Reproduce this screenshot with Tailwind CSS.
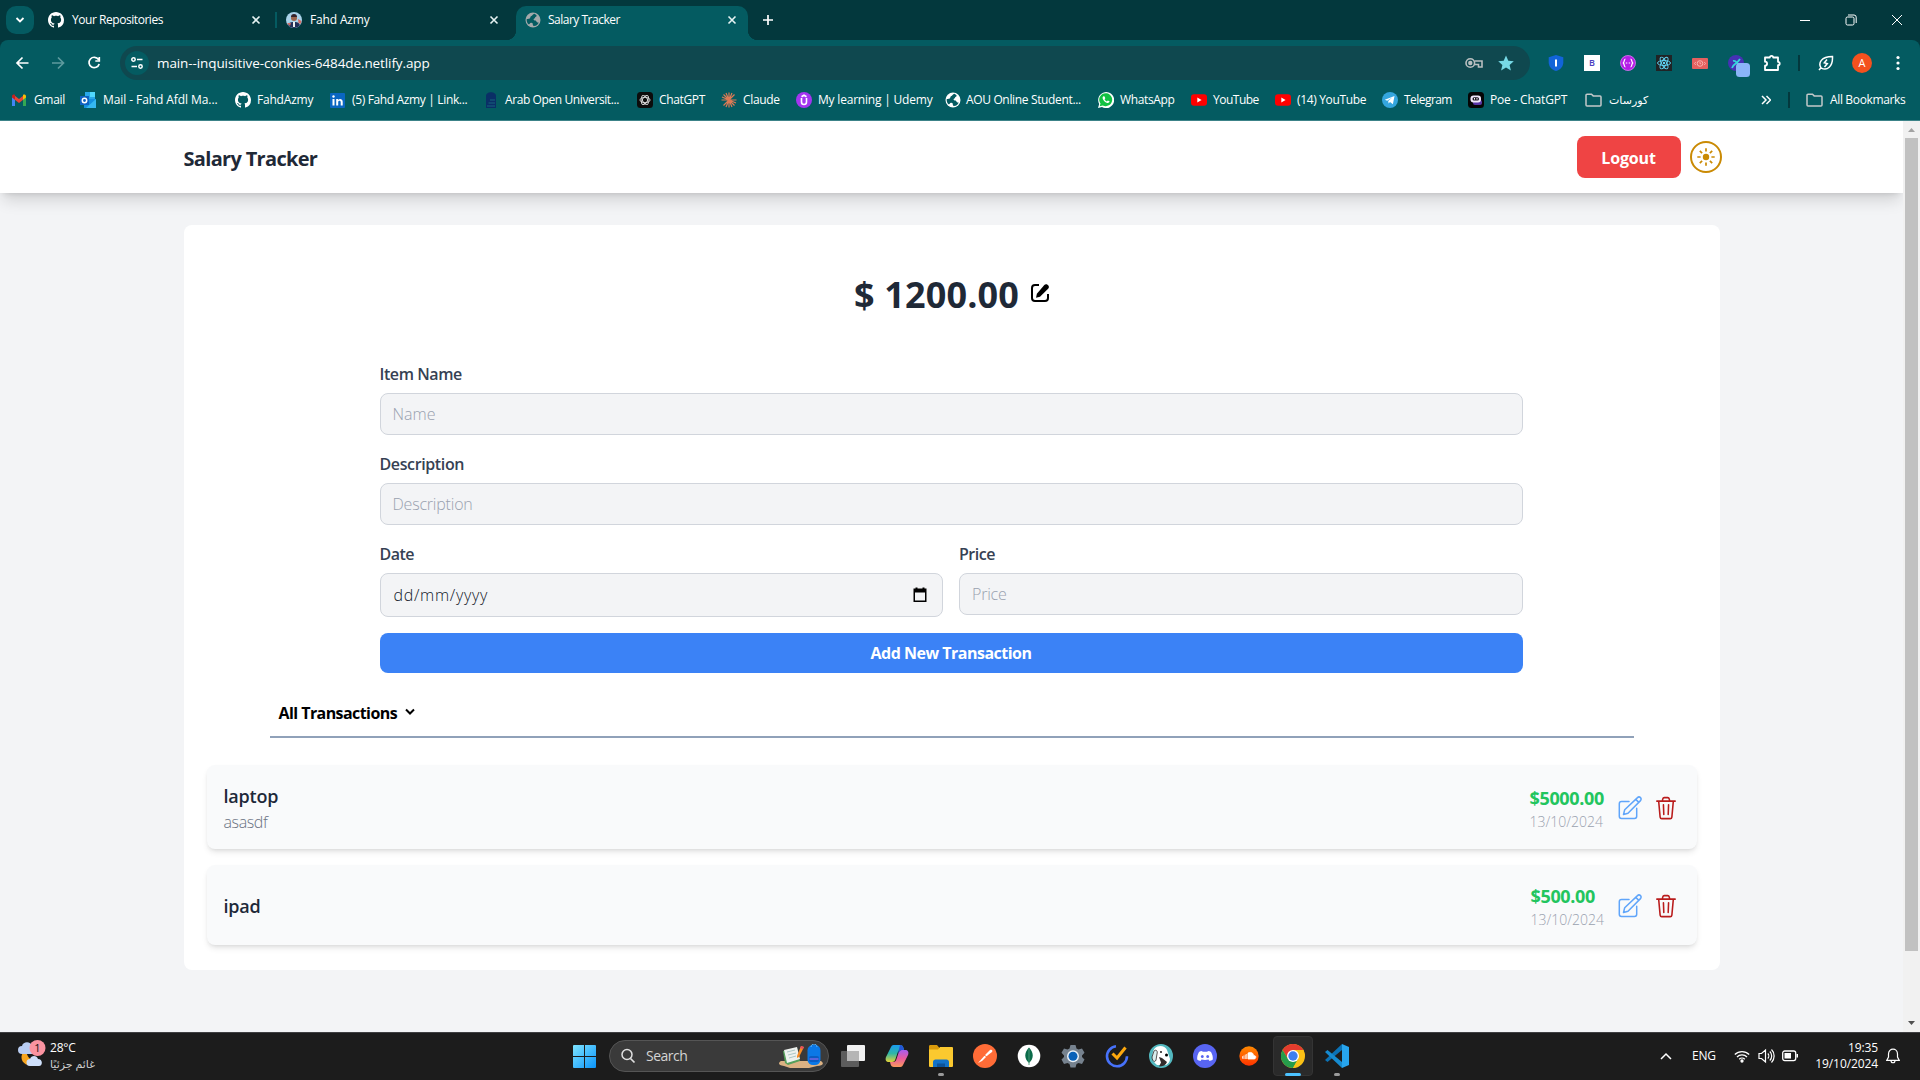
<!DOCTYPE html>
<html lang="en">
<head>
<meta charset="utf-8">
<title>Salary Tracker</title>
<script src="https://cdn.jsdelivr.net/npm/@tailwindcss/browser@4"></script>
</head>
<body class="w-[1920px] h-[1080px] overflow-hidden flex flex-col bg-gray-100 font-['Open_Sans','Noto_Sans',sans-serif]">
<svg class="hidden">
  <symbol id="github" viewBox="0 0 16 16"><path fill="#fff" d="M8 0C3.58 0 0 3.58 0 8c0 3.54 2.29 6.53 5.47 7.59.4.07.55-.17.55-.38 0-.19-.01-.82-.01-1.49-2.01.37-2.53-.49-2.69-.94-.09-.23-.48-.94-.82-1.13-.28-.15-.68-.52-.01-.53.63-.01 1.08.58 1.23.82.72 1.21 1.87.87 2.33.66.07-.52.28-.87.51-1.07-1.78-.2-3.64-.89-3.64-3.95 0-.87.31-1.59.82-2.15-.08-.2-.36-1.02.08-2.12 0 0 .67-.21 2.2.82.64-.18 1.32-.27 2-.27s1.36.09 2 .27c1.53-1.04 2.2-.82 2.2-.82.44 1.1.16 1.92.08 2.12.51.56.82 1.27.82 2.15 0 3.07-1.87 3.75-3.65 3.95.29.25.54.73.54 1.48 0 1.07-.01 1.93-.01 2.2 0 .21.15.46.55.38A8.01 8.01 0 0 0 16 8c0-4.42-3.58-8-8-8z"/></symbol>
  <symbol id="x" viewBox="0 0 10 10"><path d="M1.5 1.5l7 7M8.500 1.500l-7 7" stroke="#e6f3f3" stroke-width="1.6" fill="none"/></symbol>
  <symbol id="globe" viewBox="0 0 16 16"><circle cx="8" cy="8" r="7.500" fill="currentColor"/><path fill="#045b61" d="M9.500 1.800c-2 .4-2 2-3.500 2.400-1 .4-.3 1.800-1.300 2.400-.8.5-1.700.4-3 .4-.2 2 .4 4 1.800 5.200C5 12.800 4.600 11 6 10.800c1.500-.1 2 .9 1.800 2 .8.500.2 1.300 1 1.300 2.800-.2 4.200-1.900 4.900-3.700-1.400.2-2-.4-2.400-1.200-.6-1.200-2.400-.4-2.700-1.400-.3-1.200 1.500-1 1.500-2.200 0-1 1.700-.8 1.600-1.800-.2-.8-1.200-1.400-2.200-2z"/></symbol>
  <symbol id="youtube" viewBox="0 0 16 16"><rect y="2.300" width="16" height="11.500" rx="3" fill="#f00"/><path d="M6.300 5.500v5L10.600 8z" fill="#fff"/></symbol>
  <symbol id="folder" viewBox="0 0 17 14"><path d="M1 2.200a1 1 0 0 1 1-1h4.500l1.700 1.700H15a1 1 0 0 1 1 1v8a1 1 0 0 1-1 1H2a1 1 0 0 1-1-1z" fill="none" stroke="#c3c9c9" stroke-width="1.500"/></symbol>
  <symbol id="edit" viewBox="0 0 24 24"><path d="M11 5.500H3.500A2.200 2.200 0 0 0 1.300 7.700v12.600a2.200 2.200 0 0 0 2.200 2.200h13a2.200 2.200 0 0 0 2.200-2.200v-8M5.500 18.500l1.200-4.700L19.500 1.600a2 2 0 0 1 3 3L10 17.200zM17.800 3.400l3 3" fill="none" stroke="#60a5fa" stroke-width="1.500" stroke-linejoin="round" stroke-linecap="round"/></symbol>
  <symbol id="trash" viewBox="0 0 24 26"><path d="M2 5.500h20M4 5.500l1.600 17.400c.1 1 .8 1.700 1.800 1.700h9.200c1 0 1.700-.7 1.800-1.700L20 5.500M8 5.200L8.500 3c.2-.8.8-1.300 1.600-1.300h3.800c.8 0 1.400.5 1.600 1.300l.5 2.200M9.200 9.500l.4 10.500M14.800 9.500l-.4 10.500" fill="none" stroke="#b91c1c" stroke-width="1.700" stroke-linecap="round" stroke-linejoin="round"/></symbol>
</svg>

<!-- Tab strip -->
<div class="h-10 shrink-0 bg-[#03383d] flex items-end text-white text-xs">
  <div class="w-[34px] h-10 pl-1.5 flex items-center"><div class="w-7 h-7 rounded-[10px] bg-[#045b61] flex items-center justify-center"><svg class="w-2.5 h-2.5" viewBox="0 0 10 10"><path d="M1.500 3l3.500 3.500L8.500 3" fill="none" stroke="#fff" stroke-width="1.800"/></svg></div></div>
  <div class="w-[241px] h-10 flex items-center pl-3.5 pr-3.5"><svg class="w-4 h-4"><use href="#github"/></svg><span class="ml-2 flex-1 whitespace-nowrap tracking-[-0.45px]">Your Repositories</span><svg class="w-2.5 h-2.5"><use href="#x"/></svg></div>
  <div class="w-0.5 h-4 mb-3 bg-[#045b61]"></div>
  <div class="w-[239px] h-10 flex items-center pl-[9px] pr-[17px]"><svg class="w-4 h-4" viewBox="0 0 16 16"><circle cx="8" cy="8" r="8" fill="#a9d3ea"/><path d="M2 13.300C3 10 5.500 10 8 10s5 0 6 3.300A8 8 0 0 1 2 13.300z" fill="#22305a"/><path d="M1 11h4l-1 3zM12 7l3.500 2-1 3-2-1z" fill="#d56b64"/><circle cx="8" cy="6" r="3" fill="#9b654e"/><path d="M5 5a3 3 0 0 1 6 0z" fill="#33242c"/><path d="M7 10h2v5H7z" fill="#eee"/></svg><span class="ml-2 flex-1 tracking-[-0.15px]">Fahd Azmy</span><svg class="w-2.5 h-2.5"><use href="#x"/></svg></div>
  <div class="relative w-[232px] h-[34px] rounded-t-[10px] bg-[#045b61] flex items-center pl-[9px] pr-[11px]">
    <span class="absolute -left-2.5 bottom-0 w-2.5 h-2.5 bg-[radial-gradient(circle_at_0_0,#03383d_10px,#045b61_10.5px)]"></span>
    <span class="absolute -right-2.5 bottom-0 w-2.5 h-2.5 bg-[radial-gradient(circle_at_100%_0,#03383d_10px,#045b61_10.5px)]"></span>
    <svg class="w-4 h-4 text-[#a3a9ab] -mt-1.5"><use href="#globe"/></svg><span class="ml-[7px] flex-1 -mt-1.5 tracking-[-0.5px]">Salary Tracker</span><svg class="w-2.5 h-2.5 -mt-1.5"><use href="#x"/></svg>
  </div>
  <div class="flex-1 h-10 flex items-center pl-[14px]"><svg class="w-3 h-3" viewBox="0 0 12 12"><path d="M6 1v10M1 6h10" stroke="#fff" stroke-width="1.700"/></svg></div>
  <div class="h-10 flex items-center">
    <div class="w-[46px] flex justify-center"><div class="w-2.5 h-px bg-white"></div></div>
    <div class="w-[46px] flex justify-center"><svg class="w-3 h-3" viewBox="0 0 12 12"><path d="M3 1h6a2.200 2.200 0 0 1 2.200 2.200V9M2.500 3h5A1.500 1.500 0 0 1 9 4.500v5A1.500 1.500 0 0 1 7.500 11h-5A1.500 1.500 0 0 1 1 9.500v-5A1.500 1.500 0 0 1 2.500 3z" fill="none" stroke="#fff"/></svg></div>
    <div class="w-[46px] flex justify-center"><svg class="w-3 h-3" viewBox="0 0 12 12"><path d="M1 1l10 10M11 1L1 11" stroke="#fff"/></svg></div>
  </div>
</div>

<!-- Toolbar and bookmarks -->
<div class="shrink-0 bg-[#03383d]"><div class="h-[81px] bg-[#045b61] rounded-t-[8px] border-b border-[#3c8388]">
  <div class="h-[46px] flex items-center">
    <div class="w-[120px] pl-1 flex items-center">
      <svg class="w-9 h-4" viewBox="0 0 36 16"><path d="M24.500 8H13M18.500 2.500L13 8l5.500 5.500" fill="none" stroke="#fff" stroke-width="1.700"/></svg>
      <svg class="w-9 h-4" viewBox="0 0 36 16"><path d="M12 8h11.500M18 2.500L23.500 8 18 13.500" fill="none" stroke="#5e9a9e" stroke-width="1.700"/></svg>
      <svg class="w-9 h-4" viewBox="0 0 36 16"><path d="M22.500 4.500A5.200 5.200 0 1 0 23.200 9M23.300 2v4h-4" fill="none" stroke="#fff" stroke-width="1.700"/></svg>
    </div>
    <div class="w-[1410px] h-[34px] rounded-full bg-[#0f484f] flex items-center pl-[5px] pr-4">
      <div class="w-6 h-6 rounded-full bg-[#045b61] flex items-center justify-center"><svg class="w-3.5 h-3.5" viewBox="0 0 14 14" fill="none" stroke="#fff" stroke-width="1.500"><circle cx="3.500" cy="3.500" r="1.700"/><path d="M7 3.500h5.500M1.500 10.500h5.500"/><circle cx="10.500" cy="10.500" r="1.700"/></svg></div>
      <span class="ml-2 flex-1 text-[13.5px] text-white tracking-[-0.1px] whitespace-nowrap">main--inquisitive-conkies-6484de.netlify.app</span>
      <svg class="w-[18px] h-3 mr-[15px]" viewBox="0 0 18 12" fill="none" stroke="#b9bfc0" stroke-width="1.600"><path d="M9.500 4H17v3.200V10h-3.500V7.500H9.500"/><circle cx="5.300" cy="6" r="4.300"/><circle cx="5.300" cy="6" r="1.400" fill="#b9bfc0"/></svg>
      <svg class="w-4 h-4" viewBox="0 0 16 16"><path fill="#76d9e6" d="M8 .5l2.300 5.200 5.500.5-4.200 3.700 1.300 5.600L8 12.600l-4.900 2.900 1.300-5.600L.2 6.200l5.500-.5z"/></svg>
    </div>
    <div class="ml-2 flex items-center">
      <div class="w-9 flex justify-center"><svg class="w-4 h-4" viewBox="0 0 16 16"><path d="M8 0l7.300 2.200v5c0 4.500-3 7.500-7.300 8.800C3.700 14.700.7 11.700.7 7.200v-5z" fill="#1264d8"/><path d="M7 4.500h2v7H7z" fill="#fff"/></svg></div>
      <div class="w-9 flex justify-center"><div class="w-4 h-4 bg-white text-[#4a3fc0] text-[9px] font-semibold leading-4 text-center">B</div></div>
      <div class="w-9 flex justify-center"><svg class="w-4 h-4" viewBox="0 0 16 16"><circle cx="8" cy="8" r="7.700" fill="#b41de8"/><circle cx="8" cy="8" r="7.500" fill="none" stroke="#dfa0f2" stroke-width=".6"/><path d="M5.500 4c-1.500 0-.8 2.500-2.200 4 1.400 1.500.7 4 2.200 4M10.500 4c1.500 0 .8 2.500 2.200 4-1.400 1.500-.7 4-2.200 4M5.800 8h1.500M8.700 8h1.500" stroke="#fff" stroke-width="1.200" fill="none"/></svg></div>
      <div class="w-9 flex justify-center"><svg class="w-4 h-4" viewBox="0 0 16 16"><path fill="#202325" d="M0 0h16v16H0z"/><g fill="none" stroke="#61dafb" stroke-width=".9"><ellipse cx="8" cy="8" rx="6.500" ry="2.500"/><ellipse cx="8" cy="8" rx="6.500" ry="2.500" transform="rotate(60 8 8)"/><ellipse cx="8" cy="8" rx="6.500" ry="2.500" transform="rotate(120 8 8)"/></g><circle cx="8" cy="8" r="1.200" fill="#61dafb"/></svg></div>
      <div class="w-9 flex justify-center"><svg class="w-4 h-[11px]" viewBox="0 0 16 11"><rect width="16" height="11" rx="1" fill="#e5605f"/><circle cx="8" cy="5.500" r="2.800" fill="none" stroke="#f5b3b0"/><path d="M8 4v1.700h1.200M3.800 4L2.500 5.500l1.300 1.500M12.200 4l1.300 1.500L12.200 7" fill="none" stroke="#f5b3b0" stroke-width=".9"/></svg></div>
      <div class="w-9 flex justify-center"><svg class="w-[22px] h-[22px] translate-x-[3px] translate-y-[3px]" viewBox="0 0 22 22"><circle cx="8" cy="8" r="8" fill="#4631b5"/><path d="M4 13C6 8 8 10 12 4M5 6c4-1 3 3 6 3" fill="none" stroke="#35d5dc" stroke-width="1.800"/><rect x="8" y="8" width="14" height="14" rx="3.500" fill="#8ab4f8"/></svg></div>
      <div class="w-9 flex justify-center"><svg class="w-[18px] h-[18px]" viewBox="0 0 18 18"><path d="M2 3.500h4.800a1.700 1.700 0 0 1 3.400 0H15v4.300a1.700 1.700 0 0 1 0 3.400V16H2v-4.300c2.800-.2 2.800-3.800 0-4z" fill="none" stroke="#fff" stroke-width="1.800" stroke-linejoin="round"/></svg></div>
      <div class="w-[18px] flex justify-center"><div class="w-0.5 h-4 bg-[#03383d]"></div></div>
      <div class="w-9 flex justify-center"><svg class="w-4 h-4" viewBox="0 0 16 16" fill="none" stroke="#fff" stroke-width="1.500"><path d="M1 15l2-2.200C0 8 3 1.500 14.500 1.500 15 11.500 9 16.500 3 12.800M9 4.500L6.300 7.800l3 .8L6.500 12"/></svg></div>
      <div class="w-9 flex justify-center"><div class="w-5 h-5 rounded-full bg-[#f4511e] text-white text-[11px] leading-5 text-center">A</div></div>
      <div class="w-9 flex justify-center"><svg class="w-1 h-4" viewBox="0 0 4 16" fill="#fff"><circle cx="2" cy="2.500" r="1.600"/><circle cx="2" cy="8" r="1.600"/><circle cx="2" cy="13.500" r="1.600"/></svg></div>
    </div>
  </div>
  <div class="h-7 flex items-center pl-[11px] text-white text-xs whitespace-nowrap tracking-[-0.35px]">
    <div class="w-[69px] flex items-center gap-[7px]"><svg class="w-4 h-4" viewBox="0 0 16 16"><path fill="#4285f4" d="M1 14h3V7L1 4.500z"/><path fill="#34a853" d="M12 14h3V4.500L12 7z"/><path fill="#ea4335" d="M3.500 3.500L8 7l4.500-3.500v4L8 11 3.500 7.500z"/><path fill="#c5221f" d="M1 4.500C1 2.500 3 2 4 3v4.700L1 5.500z"/><path fill="#fbbc04" d="M15 4.500C15 2.500 13 2 12 3v4.700l3-2.200z"/></svg>Gmail</div>
    <div class="w-[155px] flex items-center gap-[7px] tracking-[-0.08px]"><svg class="w-4 h-4" viewBox="0 0 16 16"><path fill="#28a8ea" d="M5 0h10v9H5z"/><path fill="#50d9ff" d="M10 0h5v5h-5z"/><path fill="#1490df" d="M4 7l12 0v9H4z"/><path fill="#35b8f1" d="M16 7v9H6z"/><path fill="#0f62c0" d="M0 4h9v9H0z"/><circle cx="4.500" cy="8.500" r="2.200" fill="none" stroke="#fff" stroke-width="1.500"/></svg>Mail - Fahd Afdl Ma...</div>
    <div class="w-[95px] flex items-center gap-[6px] tracking-[-0.2px]"><svg class="w-4 h-4"><use href="#github"/></svg>FahdAzmy</div>
    <div class="w-[153px] flex items-center gap-[7px]"><svg class="w-[15px] h-[15px]" viewBox="0 0 15 15"><rect width="15" height="15" rx="1" fill="#0a66c2"/><path d="M2.500 6h2v6.500h-2zM6.200 6h2v1c1-1.700 4.500-1.500 4.500 1.700v3.800h-2V9.200c0-2-2.500-1.800-2.500 0v3.300h-2z" fill="#fff"/><circle cx="3.500" cy="3.500" r="1.200" fill="#fff"/></svg>(5) Fahd Azmy | Link...</div>
    <div class="w-[154px] flex items-center gap-[6px] tracking-[-0.4px]"><svg class="w-4 h-4" viewBox="0 0 16 16"><path d="M3 16V4c0-5 10-5 10 0v12z" fill="#0a2f66"/><path d="M7 8h5M5.500 11H12M4 14h8" stroke="#17657c"/></svg>Arab Open Universit...</div>
    <div class="w-[84px] flex items-center gap-[6px]"><svg class="w-4 h-4" viewBox="0 0 16 16"><rect width="16" height="16" rx="3.500" fill="#0c0c0c"/><g fill="none" stroke="#ddd" stroke-width=".9"><ellipse cx="8" cy="8" rx="5" ry="2.600"/><ellipse cx="8" cy="8" rx="5" ry="2.600" transform="rotate(60 8 8)"/><ellipse cx="8" cy="8" rx="5" ry="2.600" transform="rotate(120 8 8)"/></g></svg>ChatGPT</div>
    <div class="w-[75px] flex items-center gap-[6px]"><svg class="w-4 h-4" viewBox="0 0 16 16"><path d="M8 .5v15M.5 8h15M2.500 2.500l11 11M13.500 2.500l-11 11M5 1l6 14M11 1L5 15M1 5l14 6" stroke="#dc7a55" stroke-width="1.200"/></svg>Claude</div>
    <div class="w-[149px] flex items-center gap-[6px] tracking-[-0.2px]"><svg class="w-4 h-4" viewBox="0 0 16 16"><circle cx="8" cy="8" r="8" fill="#a435f0"/><path d="M5.500 6v4c0 3.300 5 3.300 5 0V6M5.500 4.800L8 3.300l2.500 1.500" fill="none" stroke="#fff" stroke-width="1.600"/></svg>My learning | Udemy</div>
    <div class="w-[153px] flex items-center gap-[5px]"><svg class="w-4 h-4 text-white"><use href="#globe"/></svg>AOU Online Student...</div>
    <div class="w-[93px] flex items-center gap-[6px]"><svg class="w-4 h-4" viewBox="0 0 16 16"><path d="M0 16l1.200-4A8 8 0 1 1 4 14.900z" fill="#fff"/><path d="M1.700 14.300l.8-2.700A6.500 6.500 0 1 1 4.800 13.500z" fill="#12c143"/><path d="M5.300 4.300c-2 1.500.5 5.800 4 6.700 1.300.3 2.500-1 2.200-1.700L9.800 8.500l-.9.900C7.800 9 7 8 6.600 7.200l.7-.9-.7-1.900z" fill="#fff"/></svg>WhatsApp</div>
    <div class="w-[84px] flex items-center gap-[6px] tracking-[-0.5px]"><svg class="w-4 h-4"><use href="#youtube"/></svg>YouTube</div>
    <div class="w-[107px] flex items-center gap-[6px]"><svg class="w-4 h-4"><use href="#youtube"/></svg>(14) YouTube</div>
    <div class="w-[86px] flex items-center gap-[6px] tracking-[-0.55px]"><svg class="w-4 h-4" viewBox="0 0 16 16"><circle cx="8" cy="8" r="8" fill="#35a6de"/><path d="M2.800 7.800L12.500 4l-1.600 8.200L8 10l-1.400 1.500-.4-2.500 4-3.500-5 3.200z" fill="#fff"/></svg>Telegram</div>
    <div class="w-[117px] flex items-center gap-[6px] tracking-[-0.2px]"><svg class="w-4 h-4" viewBox="0 0 16 16"><rect width="16" height="16" rx="3.500" fill="#050505"/><rect x="5" y="8" width="9" height="5" rx="2" fill="#5a35a5"/><rect x="2.500" y="3.500" width="10.500" height="7" rx="3" fill="#f0e8fa"/><rect x="4.500" y="5.300" width="6.500" height="3.200" rx="1.500" fill="#1a1520"/><path d="M6.500 6v1.600M9 6v1.600" stroke="#fff"/></svg>Poe - ChatGPT</div>
    <div class="flex-1 flex items-center gap-[7px]"><svg class="w-[17px] h-3.5"><use href="#folder"/></svg><span class="text-[11px] tracking-normal font-['Noto_Sans','DejaVu_Sans',sans-serif]">كورسات</span></div>
    <svg class="w-2.5 h-2.5 mr-[17px]" viewBox="0 0 10 10"><path d="M1 1l4 4-4 4M5.500 1l4 4-4 4" fill="none" stroke="#fff" stroke-width="1.500"/></svg>
    <div class="w-0.5 h-4 bg-[#03383d] mr-4"></div>
    <div class="w-[114px] flex items-center gap-[7px]"><svg class="w-[17px] h-3.5"><use href="#folder"/></svg>All Bookmarks</div>
  </div>
</div></div>

<!-- Page viewport -->
<div class="h-[911px] shrink-0 flex">
  <div class="w-[1903px] overflow-hidden bg-gray-100">
    <header class="h-[72px] bg-white shadow-[0_10px_15px_-3px_rgba(0,0,0,0.14),0_4px_6px_-4px_rgba(0,0,0,0.14)]">
      <div class="w-[1536px] mx-auto h-full flex items-center">
        <h1 class="flex-1 pt-1 text-xl font-bold text-[#1f2937] tracking-[-0.68px] word-spacing-[1px]">Salary Tracker</h1>
        <button class="w-[104px] h-[42px] rounded-[8px] bg-[#ef4444] text-white font-bold tracking-[-0.15px] pt-px">Logout</button>
        <div class="ml-[9px] -mr-0.5 w-8 h-8 rounded-full border-2 border-[#ca8a04] flex items-center justify-center"><svg class="w-[18px] h-[18px]" viewBox="0 0 18 18"><circle cx="9" cy="9" r="3.200" fill="#ca8a04"/><path d="M9 .3v3.300M9 14.400v3.300M.3 9h3.300M14.400 9h3.300M2.800 2.800l2.300 2.300M12.900 12.900l2.300 2.300M2.800 15.200l2.300-2.300M12.900 5.100l2.300-2.300" stroke="#ca8a04" stroke-width="1.700"/></svg></div>
      </div>
    </header>
    <main class="w-[1536px] h-[745px] mx-auto mt-8 rounded-lg bg-white px-6 pt-12">
      <div class="h-11 flex items-center justify-center gap-3 text-[#1f2937]">
        <h2 class="text-4xl font-bold tracking-[0.15px] leading-10">$ 1200.00</h2>
        <svg class="w-[18px] h-[18px] -mt-1" viewBox="0 0 18 18"><path d="M8 1H4a3 3 0 0 0-3 3v10a3 3 0 0 0 3 3h10a3 3 0 0 0 3-3v-4" fill="none" stroke="#000" stroke-width="2"/><path d="M13.300.900c.9-.8 2.200-.9 3.200-.2l.9.900c.7 1 .6 2.300-.3 3.200L9 12.800 5 13.700l.9-4z" fill="#000"/></svg>
      </div>
      <form class="w-[1143px] ml-[172px] mt-[45px] text-base">
        <label class="block h-[31px] leading-6 font-semibold text-gray-700 tracking-[-0.42px]">Item Name</label>
        <div class="h-[42px] mb-[17px] rounded-[8px] border border-gray-300 bg-gray-100 px-3 leading-[41px] font-light text-gray-400">Name</div>
        <label class="block h-[31px] leading-6 font-semibold text-gray-700 tracking-[-0.38px]">Description</label>
        <div class="h-[42px] mb-[17px] rounded-[8px] border border-gray-300 bg-gray-100 px-3 leading-[41px] font-light text-gray-400 tracking-[-0.2px]">Description</div>
        <div class="grid grid-cols-2 gap-4 h-[91px]">
          <div><label class="block h-[31px] leading-6 font-semibold text-gray-700 tracking-[-0.5px]">Date</label>
            <div class="h-11 rounded-[8px] border border-gray-300 bg-gray-100 pl-[13px] pr-[14px] flex items-center justify-between font-light text-gray-900 tracking-[0.7px]"><span>dd/mm/yyyy</span><svg class="w-4 h-4" viewBox="0 0 16 16"><path d="M1.500 1.500h13v13.500h-13z" fill="#000"/><path d="M3 5.500h10v8H3z" fill="#f3f4f6"/><path d="M3.500.5h2v2h-2zM10.500.5h2v2h-2z" fill="#000"/></svg></div></div>
          <div><label class="block h-[31px] leading-6 font-semibold text-gray-700 tracking-[-0.5px]">Price</label>
            <div class="h-[42px] rounded-[8px] border border-gray-300 bg-gray-100 px-3 leading-[41px] font-light text-gray-400 tracking-[-0.2px]">Price</div></div>
        </div>
        <div class="h-10 rounded-[8px] bg-[#3b82f6] text-white font-bold text-center leading-10 tracking-[-0.5px]">Add New Transaction</div>
      </form>
      <div class="w-[1364px] ml-[62px] mt-4 h-[49px] border-b-2 border-slate-400 pl-[9px] flex items-center gap-2 font-bold text-black tracking-[-0.57px]"><span>All Transactions</span><svg class="w-2.5 h-2 -mt-0.5" viewBox="0 0 10 8"><path d="M1 1.500L5 5.500l4-4" fill="none" stroke="#000" stroke-width="2"/></svg></div>
      <div class="mt-[27px] -mx-px flex flex-col gap-4">
        <div class="h-[84px] rounded-lg bg-gray-50 shadow-md pl-[17px] pr-[20px] pt-0.5 flex items-center">
          <div class="flex-1"><div class="text-lg leading-7 font-semibold text-gray-800 tracking-[-0.2px]">laptop</div><div class="leading-6 font-light text-gray-500 tracking-[-0.4px]">asasdf</div></div>
          <div class="w-[88px] mt-[3px]"><div class="text-lg leading-6 font-bold text-[#22c55e] tracking-[-0.35px]">$5000.00</div><div class="text-sm leading-6 font-light text-gray-400">13/10/2024</div></div>
          <svg class="w-6 h-6 mr-[13px]"><use href="#edit"/></svg>
          <svg class="w-[22px] h-[26px]"><use href="#trash"/></svg>
        </div>
        <div class="h-20 rounded-lg bg-gray-50 shadow-md pl-[17px] pr-[20px] pt-0.5 flex items-center">
          <div class="flex-1 text-lg leading-7 font-semibold text-gray-800 tracking-[-0.2px]">ipad</div>
          <div class="w-[87px] mt-[3px]"><div class="text-lg leading-6 font-bold text-[#22c55e] tracking-[-0.35px]">$500.00</div><div class="text-sm leading-6 font-light text-gray-400">13/10/2024</div></div>
          <svg class="w-6 h-6 mr-[13px]"><use href="#edit"/></svg>
          <svg class="w-[22px] h-[26px]"><use href="#trash"/></svg>
        </div>
      </div>
    </main>
  </div>
  <div class="w-[17px] bg-[#f1f1f1] flex flex-col items-center">
    <svg class="w-[17px] h-[17px]" viewBox="0 0 17 17"><path d="M5 11h7L8.500 7z" fill="#a3a3a3"/></svg>
    <div class="w-[13px] h-[813px] bg-[#c1c1c1]"></div>
    <div class="flex-1"></div>
    <svg class="w-[17px] h-[17px]" viewBox="0 0 17 17"><path d="M5 6h7l-3.500 4z" fill="#505050"/></svg>
  </div>
</div>

<!-- Taskbar -->
<div class="h-12 shrink-0 bg-[#1c1c1c] border-t border-[#3f3f42] flex items-center text-white text-xs pb-px">
  <div class="w-[563px] pl-[18px] flex items-center gap-1">
    <svg class="w-7 h-7 -mt-1" viewBox="0 0 28 28"><path d="M12 12a8 8 0 1 0 11 10c-6 1-10-2-11-10z" fill="#f7a51f" transform="translate(-4 -2)"/><path d="M4 14a4 4 0 0 1 0-8c1-5 9-5 10 0 4 1 3 8 0 8z" fill="#b9cdf2"/><path d="M12 26a3.500 3.500 0 0 1 0-7c1-4 7-4 8 0 5 0 5 7 1 7z" fill="#cfe0fb"/><circle cx="19.500" cy="8" r="8" fill="#fb93a0"/><text x="19.500" y="12" text-anchor="middle" font-size="11" fill="#111">1</text></svg>
    <div class="leading-4"><div class="tracking-[-0.2px]">28°C</div><div class="text-[#d0d0d0] text-[11px] font-['Noto_Sans','DejaVu_Sans',sans-serif]">غائم جزئيًا</div></div>
  </div>
  <div class="w-[46px] pl-2.5"><svg class="w-[23px] h-[23px]" viewBox="0 0 23 23"><defs><linearGradient id="win" x2="1" y2="1"><stop stop-color="#7ee4ff"/><stop offset="1" stop-color="#0a94fb"/></linearGradient></defs><path d="M0 1a1 1 0 0 1 1-1h10v11H0zM12 0h10a1 1 0 0 1 1 1v10H12zM0 12h11v11H1a1 1 0 0 1-1-1zM12 12h11v10a1 1 0 0 1-1 1H12z" fill="url(#win)"/></svg></div>
  <div class="w-[220px] h-8 rounded-full bg-[#3a3a3a] border border-[#555] flex items-center pl-[10px] pr-1">
    <svg class="w-4 h-4" viewBox="0 0 16 16"><circle cx="7" cy="6.500" r="5" fill="none" stroke="#e0e0e0" stroke-width="1.500"/><path d="M10.500 10.500l4 4" stroke="#e0e0e0" stroke-width="1.700"/></svg>
    <span class="flex-1 ml-[10px] text-sm text-[#d4d4d4] tracking-[-0.5px]">Search</span>
    <svg class="w-[46px] h-6" viewBox="0 0 46 24"><path d="M3 17h40c4 3 1 5-4 5l-8 2H12l-6-2c-6-1-6-3-3-5z" fill="#dcb283"/><path d="M5 7l14-3 3 13-12 4-3-2z" fill="#56a05c"/><path d="M6 6l13-3 3 12-13 4z" fill="#eef1ee"/><path d="M9 8l8-2M10 11l8-2M11 14l7-2" stroke="#9bb" stroke-width=".8"/><path d="M23 2l3 1-5 10-2 1v-2z" fill="#f58c27"/><path d="M23 2l3 1-1 2-3-1z" fill="#e84c5f"/><rect x="29.500" y="1" width="13" height="20" rx="5.500" fill="#0b78e6"/><path d="M33 3c0-4 6-4 6 0" stroke="#5ab8ff" fill="none"/><rect x="31" y="12" width="10" height="6" rx="2" fill="#0a5cc4"/><path d="M31.500 15h9" stroke="#a76ff5"/></svg>
  </div>
  <div class="ml-0.5 flex items-center">
    <div class="w-11 flex justify-center"><svg class="w-6 h-[22px]" viewBox="0 0 24 22"><rect y="6" width="18" height="16" rx="1" fill="#5c5c5c"/><rect x="6" width="18" height="16" rx="1" fill="#f1f1f1"/><path d="M6 6h12v10H6z" fill="#b5b5b5"/></svg></div>
    <div class="w-11 flex justify-center"><svg class="w-6 h-6" viewBox="0 0 24 24"><defs><linearGradient id="cpa" x2="0" y2="1"><stop stop-color="#1a9bf0"/><stop offset=".5" stop-color="#2fb6a7"/><stop offset="1" stop-color="#e4d435"/></linearGradient><linearGradient id="cpb" x2="0" y2="1"><stop stop-color="#a65cf0"/><stop offset=".5" stop-color="#e95a9d"/><stop offset="1" stop-color="#fb9a5c"/></linearGradient></defs><path d="M6 3c1-2 2-2 4-2h5c2 0 3 1 3.500 3l.5 2h-3c-2 0-3 1-3.500 3l-2 6c-.5 2-1.500 3-3.500 3H4c-3 0-4-2-3-5z" fill="url(#cpa)"/><path d="M18 21c-1 2-2 2-4 2H9c-2 0-3-1-3.500-3L5 18h3c2 0 3-1 3.500-3l2-6c.5-2 1.500-3 3.500-3h3c3 0 4 2 3 5z" fill="url(#cpb)"/><path d="M15 1c2 0 3 1 3.500 3l.5 2h-3l-3 3z" fill="#2456d6"/></svg></div>
    <div class="relative w-11 flex justify-center"><svg class="w-6 h-[22px]" viewBox="0 0 24 22"><path d="M0 1.500C0 .5.500 0 1.500 0H8l2.500 3H24v5H0z" fill="#d99a0b"/><path d="M0 4.500h9L11 2h12a1 1 0 0 1 1 1v18a1 1 0 0 1-1 1H1a1 1 0 0 1-1-1z" fill="#fbc92f"/><path d="M4 22v-5c0-1.500 1-2.500 2.500-2.500h11c1.500 0 2.500 1 2.500 2.500v5z" fill="#1272c8"/><path d="M8 18.500h8V22H8z" fill="#0d5399"/></svg><span class="absolute -bottom-[9px] w-1.5 h-[3px] rounded-full bg-[#9a9a9a]"></span></div>
    <div class="w-11 flex justify-center"><svg class="w-6 h-6" viewBox="0 0 24 24"><circle cx="12" cy="12" r="12" fill="#ff6c37"/><path d="M5 19l8-9 4-4c2-1 3 1 2 2l-4 3-6 6z" fill="#fff"/><path d="M11 11l3 2" stroke="#ff6c37"/></svg></div>
    <div class="w-11 flex justify-center"><svg class="w-6 h-6" viewBox="0 0 24 24"><circle cx="12" cy="12" r="11.300" fill="#fff"/><path d="M12 3.500c5 5 5 11 0 15.500-5-4.500-5-10.500 0-15.500z" fill="#0b6b4a"/><path d="M12 5v16" stroke="#4c9c7c" stroke-width=".9"/></svg></div>
    <div class="w-11 flex justify-center"><svg class="w-6 h-6" viewBox="0 0 24 24"><path d="M9.500 1h5l1 3.500 2 1 3.500-1 2.500 4.300L21 11.500v1.500l2.500 2.500L21 20l-3.500-1-2 1L14.500 23.500h-5l-1-3.500-2-1L3 20 .5 15.500 3 13v-1.500L.5 8.800 3 4.500l3.500 1 2-1z" fill="#76828e"/><circle cx="12" cy="12.200" r="6" fill="#e9f0f7"/><circle cx="12" cy="12.200" r="4.500" fill="#0961b8"/></svg></div>
    <div class="w-11 flex justify-center"><svg class="w-6 h-6" viewBox="0 0 24 24"><path d="M11 2.300a10 10 0 1 0 11 10" fill="none" stroke="#4772fa" stroke-width="2.600"/><path d="M7.500 9.500l4.500 4.500L20.500 3.500" fill="none" stroke="#fda80d" stroke-width="3"/></svg></div>
    <div class="w-11 flex justify-center"><svg class="w-6 h-6" viewBox="0 0 24 24"><circle cx="12" cy="12" r="11" fill="#53b8bf" stroke="#53b8bf" stroke-width="2"/><path d="M6 4c3-3 10-3 12 2l3 9c0 3-2 5-4 6H8C3 18 2 9 6 4z" fill="#fff"/><path d="M5 7c2-2 4 0 3 3l-1 6c-1 3-4 1-4-3z" fill="#d9eeee" stroke="#322b2b" stroke-width=".8"/><path d="M10 13l3 1 5 4c-1 3-4 4.500-8 4.500l2-4z" fill="#322b2b"/><circle cx="12" cy="8" r=".9"/><circle cx="17.500" cy="11" r="1.500"/></svg></div>
    <div class="w-11 flex justify-center"><svg class="w-6 h-6" viewBox="0 0 24 24"><circle cx="12" cy="12" r="12" fill="#5865f2"/><path d="M8.500 7l1.500.700h4L15.500 7c1.500.3 2.500 1 2.500 1 1.500 2.500 2 5 1.800 7.500-1.300 1-2.500 1.300-3.300 1.500l-1-1.500c-2 .6-5 .6-7 0l-1 1.500c-.8-.2-2-.5-3.300-1.500C4 13 4.500 10.500 6 8c0 0 1-.7 2.500-1z" fill="#fff"/><ellipse cx="9.300" cy="12.500" rx="1.400" ry="1.600" fill="#5865f2"/><ellipse cx="14.700" cy="12.500" rx="1.400" ry="1.600" fill="#5865f2"/></svg></div>
    <div class="w-11 flex justify-center"><svg class="w-5 h-5" viewBox="0 0 20 20"><defs><linearGradient id="sc" x2="0" y2="1"><stop stop-color="#ff8a00"/><stop offset="1" stop-color="#ff3300"/></linearGradient></defs><circle cx="10" cy="10" r="9.700" fill="url(#sc)"/><path d="M9 13V7c3-1.500 5.500 0 5.500 2.500C17.500 9 17.500 13 15 13zM7.700 8v5M6.300 8.500V13M4.900 9.500V13M3.500 10.200v2.500" fill="#fff" stroke="#fff" stroke-width=".8"/></svg></div>
    <div class="relative w-11 flex justify-center"><div class="w-10 h-10 rounded bg-[#2a2a2a] border border-[#343434] flex items-center justify-center"><svg class="w-6 h-6" viewBox="0 0 24 24"><circle cx="12" cy="12" r="12" fill="#fbc116"/><path d="M1.600 6A12 12 0 0 1 22.400 6H12L7 15z" fill="#e33b2e"/><path d="M1.600 6A12 12 0 0 0 12 24l5-9H7z" fill="#269c4b"/><path d="M12 6h10.400c3 6-.5 17-10.400 18l5.200-9z" fill="#fbc116"/><circle cx="12" cy="12" r="6" fill="#fff"/><circle cx="12" cy="12" r="4.700" fill="#3d7fee"/></svg></div><span class="absolute bottom-0 w-4 h-[3px] rounded-full bg-[#4cc2ff]"></span></div>
    <div class="relative w-11 flex justify-center"><svg class="w-6 h-6" viewBox="0 0 24 24"><path d="M17 6L2.500 18 0 16l17-16z" fill="#0b72b5"/><path d="M0 8l2.500-2L17 18v6z" fill="#168bd0"/><path d="M17 0l7 3v18l-7 3z" fill="#27a5ee"/></svg><span class="absolute -bottom-2 w-1.5 h-[3px] rounded-full bg-[#9a9a9a]"></span></div>
  </div>
  <div class="flex-1"></div>
  <svg class="w-3 h-2 mr-5" viewBox="0 0 12 8"><path d="M1 7l5-5 5 5" fill="none" stroke="#fff" stroke-width="1.500"/></svg>
  <span class="w-[42px] text-xs tracking-[-0.2px]">ENG</span>
  <svg class="w-4 h-3.5 mr-2" viewBox="0 0 16 14" fill="none" stroke="#fff" stroke-width="1.300"><path d="M.8 5.500a10.300 10.300 0 0 1 14.400 0M3 8a7 7 0 0 1 10 0M5.200 10.300a4 4 0 0 1 5.600 0"/><circle cx="8" cy="12" r="1" fill="#fff"/></svg>
  <svg class="w-[17px] h-4 mr-[7px]" viewBox="0 0 17 16" fill="none" stroke="#fff" stroke-width="1.200"><path d="M1 5.500h2.500L7.500 2v12l-4-3.500H1zM9.800 5.500c1.300 1.300 1.300 3.700 0 5M11.800 3.500c2.500 2.500 2.500 6.500 0 9M13.500 1.500c3.500 3.500 3.500 9.500 0 13"/></svg>
  <svg class="w-4 h-3 mr-[17px]" viewBox="0 0 16 12"><rect x=".7" y="1" width="13" height="9.600" rx="2" fill="none" stroke="#fff" stroke-width="1.300"/><path d="M2.500 3h6.500v5.600H2.500zM14.500 4h1.500v3.500h-1.500z" fill="#fff"/></svg>
  <div class="w-[63px] text-right leading-4 text-xs tracking-[-0.1px] whitespace-nowrap"><div>19:35</div><div>19/10/2024</div></div>
  <svg class="w-3.5 h-4 ml-2 mr-5" viewBox="0 0 14 16" fill="none" stroke="#fff" stroke-width="1.200"><path d="M.8 12.300L2.500 9V6c0-6.500 9-6.500 9 0v3l1.700 3.300zM5 12.500c0 3 4 3 4 0"/></svg>
</div>
</body>
</html>
